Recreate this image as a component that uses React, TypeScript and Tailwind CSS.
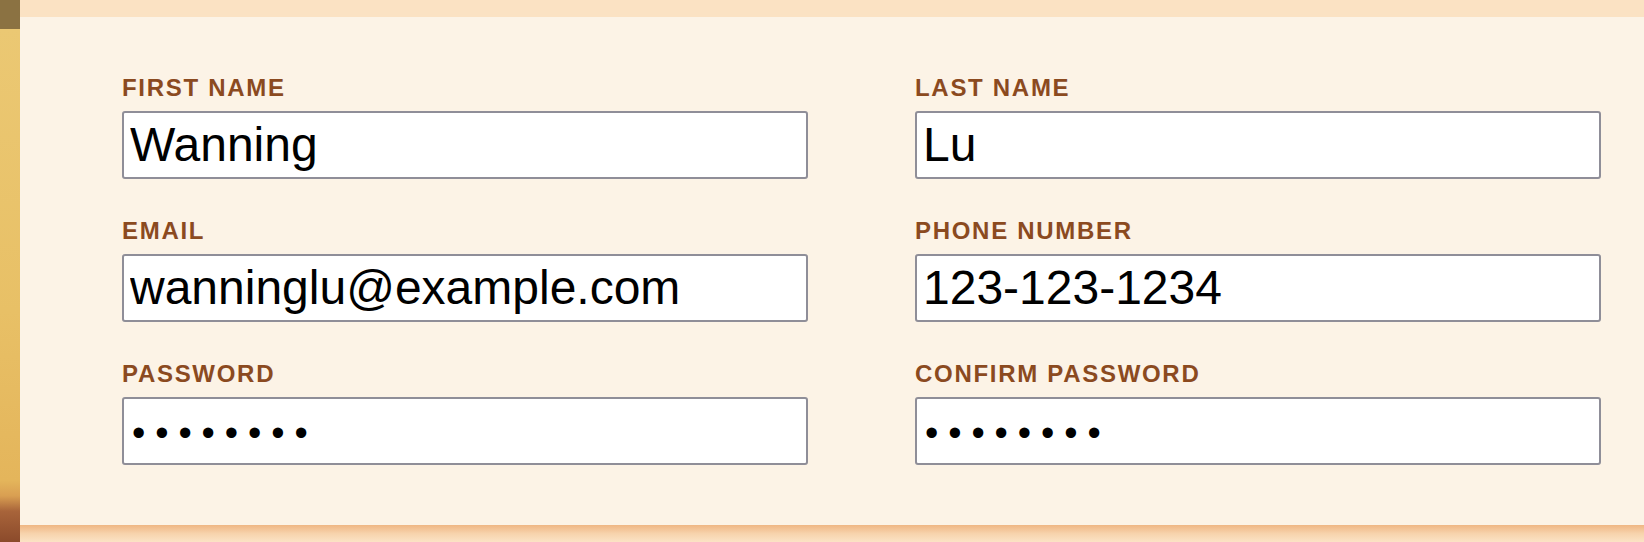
import React from 'react';

interface Field {
  label: string;
  type: string;
  value: string;
}

const fields: Field[] = [
  { label: 'First Name', type: 'text', value: 'Wanning' },
  { label: 'Last Name', type: 'text', value: 'Lu' },
  { label: 'Email', type: 'email', value: 'wanninglu@example.com' },
  { label: 'Phone Number', type: 'tel', value: '123-123-1234' },
  { label: 'Password', type: 'password', value: 'password' },
  { label: 'Confirm Password', type: 'password', value: 'password' },
];

const App: React.FC = () => {
  return (
    <div className="flex h-[542px] w-[1644px] overflow-hidden bg-[#fbe3c5] font-['Liberation_Sans',Arial,sans-serif]">
      {/* strip of the background picture on the left */}
      <div className="flex w-[20px] shrink-0 flex-col">
        <div className="h-[29px] bg-[#8b7242]" />
        <div className="flex-1 bg-[linear-gradient(to_bottom,#ebc873_0%,#e8c066_55%,#e4b55b_88%,#d99f52_91%,#a8643a_94%,#8b4a2b_100%)]" />
      </div>

      <div className="flex min-w-0 flex-1 flex-col">
        <div className="h-[17px] bg-[#fbe2c3]" />

        <form className="bg-[#fcf3e6] pb-[60px] pl-[102px] pt-[57px]">
          <div className="grid grid-cols-[686px_686px] gap-x-[107px] gap-y-[38px]">
            {fields.map((field) => (
              <label key={field.label} className="flex flex-col">
                <span className="mb-[9px] text-[24px] font-bold uppercase leading-[28px] tracking-[1.7px] text-[#8b4a1f]">
                  {field.label}
                </span>
                <input
                  type={field.type}
                  defaultValue={field.value}
                  readOnly
                  className={`h-[68px] w-full rounded-[3px] border-2 border-[#8f8e98] bg-white text-black outline-none ${
                    field.type === 'password'
                      ? 'px-[8px] pt-[5px] text-[38px] tracking-[9.9px]'
                      : 'px-[6px] text-[48px]'
                  }`}
                />
              </label>
            ))}
          </div>
        </form>

        <div className="flex-1 bg-linear-to-b from-[#efb683] via-[#f7d3ac] to-[#fbe3c5]" />
      </div>
    </div>
  );
};

export default App;
